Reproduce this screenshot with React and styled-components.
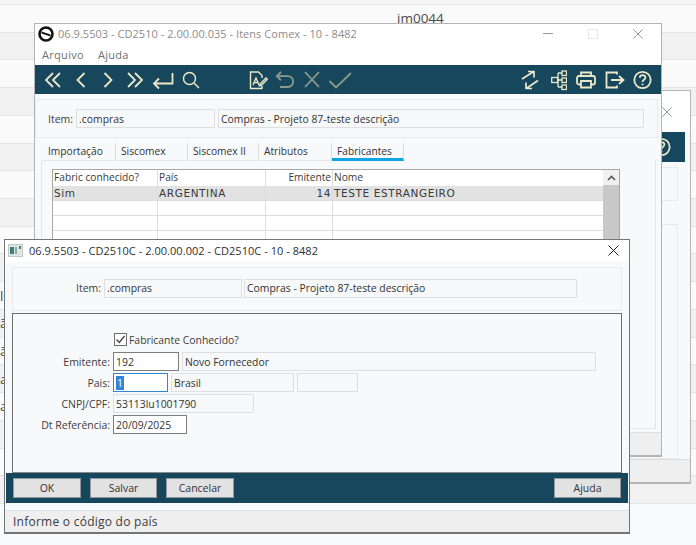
import React from 'react';
import styled, { createGlobalStyle } from 'styled-components';

const Global = createGlobalStyle`
  html, body { margin: 0; padding: 0; background: #f9fafc; }
  body { font-family: 'Open Sans', 'Noto Sans', sans-serif; font-size: 11px; color: #333; }
`;

const Page = styled.div`
  position: relative;
  width: 696px;
  height: 545px;
  overflow: hidden;
  background: #f9fafc;
`;

const Backdrop = styled.div`
  display: flex;
  flex-direction: column;
`;

const TopStrip = styled.div`
  height: 4px;
  background: #f5f5f5;
  border-bottom: 1px solid #e6e6e6;
`;

const BackRow = styled.div`
  height: 27.72px;
  box-sizing: border-box;
  display: flex;
  align-items: center;
  background: ${(p) => (p.$odd ? '#f1f1f1' : '#fafafa')};
  border-bottom: 1px solid #e4e4e4;
  font-size: 13.5px;
  color: #4a4a4a;
  padding-left: ${(p) => p.$indent || 0}px;
`;

const Window = styled.div`
  position: absolute;
  left: ${(p) => p.$left}px;
  top: ${(p) => p.$top}px;
  width: ${(p) => p.$width}px;
  height: ${(p) => p.$height}px;
  box-sizing: border-box;
  border: ${(p) => (p.$active ? '1px solid #747474' : '1px solid #b4b4b4')};
  border-bottom-width: 2px;
  background: #f8f9fb;
  display: flex;
  flex-direction: column;
  overflow: hidden;
`;

const TitleBar = styled.div`
  height: ${(p) => p.$height || 21}px;
  box-sizing: border-box;
  flex: none;
  background: #fff;
  display: flex;
  align-items: center;
  padding: 0 ${(p) => p.$right || 14}px ${(p) => p.$lift || 0}px 3px;
  font-size: 11px;
  color: ${(p) => (p.$active ? '#2f2f2f' : '#8c8c8c')};
`;

const TitleText = styled.span`
  margin-left: ${(p) => p.$gap || 4}px;
  flex: 1;
  white-space: nowrap;
  letter-spacing: 0.04px;
`;

const Caption = styled.div`
  display: flex;
  align-items: center;
  gap: 35px;
`;

const MenuBar = styled.div`
  height: 19px;
  box-sizing: border-box;
  flex: none;
  background: #fff;
  display: flex;
  align-items: center;
  gap: 14px;
  padding: 0 0 3px 7px;
  font-size: 11px;
  color: #6f6f6f;
  letter-spacing: 0.3px;
`;

const Toolbar = styled.div`
  height: ${(p) => p.$height || 29}px;
  flex: none;
  margin: 0 ${(p) => p.$inset || 0}px 0 0;
  background: #17475c;
  display: flex;
  align-items: center;
  padding: 0 ${(p) => p.$end || 9}px 0 9px;
`;

const ToolIcon = styled.svg`
  flex: none;
  margin-left: ${(p) => p.$gap || 0}px;
  fill: none;
  stroke: ${(p) => (p.$off ? '#8d9b8f' : '#ebe8c9')};
  stroke-width: 1.8;
`;

const Spacer = styled.div`
  flex: 1;
`;

const HeaderPanel = styled.div`
  flex: none;
  box-sizing: border-box;
  height: ${(p) => p.$height}px;
  margin: ${(p) => p.$margin};
  border: 1px solid #e8eaec;
  display: flex;
  align-items: center;
  padding: 0 0 ${(p) => p.$lift || 0}px ${(p) => p.$pad}px;
`;

const FieldLabel = styled.span`
  color: #3c3c3c;
  font-size: 10.5px;
  margin-right: 3px;
  white-space: nowrap;
  ${(p) => p.$width && `width: ${p.$width}px; text-align: right;`}
`;

const Field = styled.div`
  box-sizing: border-box;
  flex: none;
  width: ${(p) => p.$width}px;
  height: ${(p) => p.$height || 19}px;
  margin-left: ${(p) => p.$gap || 0}px;
  padding-left: 2px;
  display: flex;
  align-items: center;
  font-size: 10.4px;
  color: #333;
  white-space: nowrap;
  border: ${(p) =>
    p.$focus ? '1px solid #2f86c8' : p.$edit ? '1px solid #7d7d7d' : '1px solid #dfdfdf'};
  background: ${(p) => (p.$edit || p.$focus ? '#fff' : '#f7f8f9')};
`;

const Tabs = styled.div`
  flex: none;
  height: 18px;
  margin: 5px 0 0 7px;
  display: flex;
  align-items: flex-end;
`;

const Tab = styled.div`
  box-sizing: border-box;
  width: ${(p) => p.$width}px;
  height: 18px;
  padding-left: ${(p) => p.$pad}px;
  font-size: 10.2px;
  line-height: 17px;
  color: #333;
  white-space: nowrap;
  border-right: 1px solid #dcdcdc;
  border-bottom: ${(p) => (p.$on ? '3px solid #0ea5e6' : '1px solid #e6e6e6')};
`;

const TabPane = styled.div`
  flex: none;
  height: 268px;
  margin: 0 5px 0 6px;
  box-sizing: border-box;
  border: 1px solid #e4e4e4;
  border-top: none;
  padding: 8px 0 0 10px;
`;

const Grid = styled.div`
  width: 568px;
  box-sizing: border-box;
  border: 1px solid #a8a8a8;
  background: #fff;
  display: flex;
`;

const GridBody = styled.div`
  flex: 1;
`;

const GridRow = styled.div`
  display: grid;
  grid-template-columns: 105px 108px 67px 1fr;
  height: ${(p) => (p.$head ? 16 : 15)}px;
  box-sizing: border-box;
  background: ${(p) => (p.$sel ? '#e2e2e2' : '#fff')};
  border-bottom: ${(p) => (p.$head ? 'none' : '1px solid #dcdcdc')};
`;

const GridCell = styled.div`
  padding: 0 1px;
  font-family: ${(p) => (p.$head ? "'Open Sans', sans-serif" : "'DejaVu Sans', sans-serif")};
  font-size: ${(p) => (p.$head ? 10.2 : 10.5)}px;
  letter-spacing: ${(p) => (p.$head ? 0 : 0.6)}px;
  line-height: ${(p) => (p.$head ? 15 : 15)}px;
  color: #3a3a3a;
  white-space: nowrap;
  text-align: ${(p) => (p.$num ? 'right' : 'left')};
  border-right: ${(p) => (p.$last ? 'none' : '1px solid #dcdcdc')};
`;

const ScrollBar = styled.div`
  width: 16px;
  flex: none;
  background: #c8c8c8;
  display: flex;
  flex-direction: column;
`;

const ScrollUp = styled.div`
  height: 15px;
  background: #f0f0f0;
  display: flex;
  align-items: center;
  justify-content: center;
`;

const StatusBar = styled.div`
  flex: none;
  height: ${(p) => p.$height || 23}px;
  box-sizing: border-box;
  background: #efefef;
  border-top: 1px solid #dedede;
  display: flex;
  align-items: center;
  padding-left: 8px;
  font-size: 12px;
  letter-spacing: 0.25px;
  color: #3c3c3c;
`;

const Form = styled.div`
  flex: none;
  box-sizing: border-box;
  height: 160px;
  margin: 2px 7px 0;
  border: 1px solid #6c6c6c;
  border-bottom-color: #8a8a8a;
  padding-top: 19px;
  display: flex;
  flex-direction: column;
  gap: 2px;
`;

const FormRow = styled.div`
  display: flex;
  align-items: center;
`;

const CheckRow = styled.div`
  display: flex;
  align-items: center;
  height: 13px;
  margin: 0 0 4px 101px;
  font-size: 10.4px;
  color: #3c3c3c;
`;

const CheckBox = styled.span`
  box-sizing: border-box;
  width: 13px;
  height: 13px;
  margin-right: 2px;
  border: 1px solid #6d6d6d;
  background: #fff;
  display: flex;
`;

const Selected = styled.span`
  background: #2f86d8;
  color: #fff;
  padding: 0 1px;
`;

const ButtonBar = styled.div`
  flex: none;
  height: 30px;
  margin: 0 1px;
  background: #17475c;
  display: flex;
  align-items: center;
  padding: 0 7px;
`;

const Button = styled.div`
  box-sizing: border-box;
  width: ${(p) => p.$width}px;
  height: 20px;
  margin-right: ${(p) => p.$gap || 0}px;
  background: #e2e2e2;
  border: 1px solid #8e9aa0;
  display: flex;
  align-items: center;
  justify-content: center;
  font-size: 10.5px;
  color: #333;
`;

const Logo = () => (
  <svg width="16" height="16" viewBox="0 0 16 16">
    <circle cx="8" cy="8" r="6.5" fill="none" stroke="#111" strokeWidth="2.6" />
    <path d="M3.5 5.6 L12.5 8.6 L12.5 10.6 L3.5 7.6 Z" fill="#111" />
  </svg>
);

const AppIcon = () => (
  <svg width="15" height="13" viewBox="0 0 15 13">
    <rect x="0.5" y="0.5" width="14" height="12" fill="#dfe4e4" stroke="#c4c8c8" />
    <rect x="2" y="3" width="4" height="7" fill="#3d7f78" />
    <rect x="7" y="3" width="2" height="7" fill="#8fa8a8" />
    <rect x="11" y="2" width="2" height="3" fill="#66757d" />
  </svg>
);

const CloseMark = ({ color = '#8a8a8a', size = 11 }) => (
  <svg width={size} height={size} viewBox="0 0 11 11" fill="none" stroke={color} strokeWidth="1">
    <path d="M0.5 0.5 L10.5 10.5 M10.5 0.5 L0.5 10.5" />
  </svg>
);

const Tool = ({ w = 20, gap, off, children }) => (
  <ToolIcon width={w} height="22" viewBox={`0 0 ${w} 22`} $gap={gap} $off={off}>
    {children}
  </ToolIcon>
);

const HelpIcon = ({ gap }) => (
  <Tool w={19} gap={gap}>
    <circle cx="9.5" cy="11" r="8.2" />
    <path d="M6.8 8.8 C6.8 5.4 12.4 5.4 12.4 8.6 C12.4 10.8 9.5 10.6 9.5 13" />
    <path d="M9.5 14.6 V16.2" />
  </Tool>
);

const LeftTools = () => (
  <>
    <Tool w={18}>
      <path d="M9 4 L2 11 L9 18 M16 4 L9 11 L16 18" />
    </Tool>
    <Tool w={11} gap={13}>
      <path d="M9.5 4 L2.5 11 L9.5 18" />
    </Tool>
    <Tool w={11} gap={17}>
      <path d="M1.5 4 L8.5 11 L1.5 18" />
    </Tool>
    <Tool w={18} gap={12}>
      <path d="M2 4 L9 11 L2 18 M9 4 L16 11 L9 18" />
    </Tool>
    <Tool w={22} gap={8}>
      <path d="M20.5 4 V14.5 H2 M7 9.5 L2 14.5 L7 19.5" />
    </Tool>
    <Tool w={18} gap={8}>
      <g strokeWidth="1.5">
        <circle cx="7.5" cy="9.5" r="6" />
        <path d="M12 14 L17 19" />
      </g>
    </Tool>
    <Tool w={19} gap={49}>
      <g strokeWidth="1.4">
        <path d="M13 17 V19.5 H1.5 V3 H9.5 L13 6.5 V9" />
        <path d="M4 16 L7 9 L10 16 M5 13.6 H9" />
        <path d="M11 15 L17 9 L18.3 10.3 L12.4 16.3 L10.5 16.8 Z" />
      </g>
    </Tool>
    <Tool w={19} gap={7} off>
      <path d="M6 3 L1.8 7.2 L6 11.4 M2 7.2 H12.5 C20 7.2 20 18 12.5 18 H5" />
    </Tool>
    <Tool w={18} gap={9} off>
      <path d="M2 3 L16 18 M16 3 L2 18" />
    </Tool>
    <Tool w={24} gap={7} off>
      <path d="M1.5 12 L8 18.5 L23 4" />
    </Tool>
  </>
);

const RightTools = () => (
  <>
    <Tool w={19}>
      <g strokeWidth="1.7">
        <path d="M2 10 L13 3 M8 2.5 H14 V8.5" />
        <path d="M18 11.5 L7 19 M12 19.5 H6 V13.5" />
      </g>
    </Tool>
    <Tool w={16} gap={12}>
      <g strokeWidth="1.3">
        <rect x="0.7" y="8.5" width="6" height="5" />
        <rect x="11" y="2" width="4.5" height="4.5" />
        <rect x="11" y="9" width="4.5" height="4.5" />
        <rect x="11" y="16" width="4.5" height="4.5" />
        <path d="M7 11 H11 M7 4 H11 M7 18 H11 M7 4 V18" />
      </g>
    </Tool>
    <Tool w={20} gap={9}>
      <path d="M5 7 V3.5 H15 V7" />
      <path d="M5 15.5 H3 C1.8 15.5 1 14.7 1 13.5 V9 C1 7.8 1.8 7 3 7 H17 C18.2 7 19 7.8 19 9 V13.5 C19 14.7 18.2 15.5 17 15.5 H15" />
      <path d="M5 12 H15 V18.5 H5 Z" />
    </Tool>
    <Tool w={20} gap={9}>
      <path d="M12 5.5 V3.5 H1.5 V18.5 H12 V16.5" />
      <path d="M6 11 H18 M14 7 L18.5 11 L14 15" />
    </Tool>
    <HelpIcon gap={8} />
  </>
);

const backRows = [
  { text: 'im0044', indent: 397 }, {}, {}, {}, {}, {}, {}, {}, {}, {},
  { text: 'li' }, { text: 'ã' }, { text: 'ã' }, { text: 'a' }, { text: 'a' }, {}, {}, {},
];

const emptyRows = [0, 1, 2, 3, 4, 5, 6, 7, 8, 9, 10, 11, 12, 13];

function MainWindow() {
  return (
    <Window $left={34} $top={23} $width={628} $height={434}>
      <TitleBar $height={22} $right={18} $lift={3}>
        <Logo />
        <TitleText>06.9.5503 - CD2510 - 2.00.00.035 - Itens Comex - 10 - 8482</TitleText>
        <Caption>
          <svg width="10" height="11" viewBox="0 0 10 11" stroke="#9a9a9a"><path d="M0 5.5 H10" /></svg>
          <svg width="10" height="10" viewBox="0 0 10 10" fill="none" stroke="#e8e8e8"><rect x="0.5" y="0.5" width="9" height="9" /></svg>
          <CloseMark size={10} />
        </Caption>
      </TitleBar>
      <MenuBar>
        <span>Arquivo</span>
        <span>Ajuda</span>
      </MenuBar>
      <Toolbar>
        <LeftTools />
        <Spacer />
        <RightTools />
      </Toolbar>
      <HeaderPanel $height={39} $margin="5px 3px 0 0" $pad={12}>
        <FieldLabel>Item:</FieldLabel>
        <Field $width={139}>.compras</Field>
        <Field $width={426} $gap={3}>Compras - Projeto 87-teste descrição</Field>
      </HeaderPanel>
      <Tabs>
        <Tab $width={74} $pad={6}>Importação</Tab>
        <Tab $width={72} $pad={5}>Siscomex</Tab>
        <Tab $width={71} $pad={5}>Siscomex II</Tab>
        <Tab $width={73} $pad={5}>Atributos</Tab>
        <Tab $width={72} $pad={5} $on>Fabricantes</Tab>
      </Tabs>
      <TabPane>
        <Grid>
          <GridBody>
            <GridRow $head>
              <GridCell $head>Fabric conhecido?</GridCell>
              <GridCell $head>País</GridCell>
              <GridCell $head $num>Emitente</GridCell>
              <GridCell $head $last>Nome</GridCell>
            </GridRow>
            <GridRow $sel>
              <GridCell>Sim</GridCell>
              <GridCell>ARGENTINA</GridCell>
              <GridCell $num>14</GridCell>
              <GridCell $last>TESTE ESTRANGEIRO</GridCell>
            </GridRow>
            {emptyRows.map((n) => (
              <GridRow key={n}>
                <GridCell />
                <GridCell />
                <GridCell />
                <GridCell $last />
              </GridRow>
            ))}
          </GridBody>
          <ScrollBar>
            <ScrollUp>
              <svg width="9" height="6" viewBox="0 0 9 6" fill="none" stroke="#555" strokeWidth="1.6">
                <path d="M1 5 L4.5 1.5 L8 5" />
              </svg>
            </ScrollUp>
          </ScrollBar>
        </Grid>
      </TabPane>
      <Spacer />
      <StatusBar />
    </Window>
  );
}

function BackWindow() {
  return (
    <Window $left={340} $top={90} $width={351} $height={394}>
      <TitleBar $height={41} $right={18}>
        <Spacer />
        <CloseMark size={10} />
      </TitleBar>
      <Toolbar $height={30} $inset={5} $end={14}>
        <Spacer />
        <HelpIcon />
      </Toolbar>
      <HeaderPanel $height={34} $margin="5px 12px 0 0" $pad={0} />
      <HeaderPanel $height={235} $margin="23px 12px 0 0" $pad={0} />
      <Spacer />
      <StatusBar />
    </Window>
  );
}

function Dialog() {
  return (
    <Window $left={4} $top={239} $width={626} $height={295} $active>
      <TitleBar $height={22} $right={10} $lift={2} $active>
        <AppIcon />
        <TitleText $gap={6}>06.9.5503 - CD2510C - 2.00.00.002 - CD2510C - 10 - 8482</TitleText>
        <CloseMark color="#222" />
      </TitleBar>
      <HeaderPanel $height={44} $margin="5px 7px 0" $pad={63} $lift={2}>
        <FieldLabel>Item:</FieldLabel>
        <Field $width={138}>.compras</Field>
        <Field $width={333} $gap={2}>Compras - Projeto 87-teste descrição</Field>
      </HeaderPanel>
      <Form>
        <CheckRow>
          <CheckBox>
            <svg width="11" height="11" viewBox="0 0 11 11" fill="none" stroke="#444" strokeWidth="1.3">
              <path d="M1.5 5.5 L4.3 8.5 L9.5 2" />
            </svg>
          </CheckBox>
          Fabricante Conhecido?
        </CheckRow>
        <FormRow>
          <FieldLabel $width={97}>Emitente:</FieldLabel>
          <Field $width={66} $edit>192</Field>
          <Field $width={414} $gap={3}>Novo Fornecedor</Field>
        </FormRow>
        <FormRow>
          <FieldLabel $width={97}>Pais:</FieldLabel>
          <Field $width={55} $focus><Selected>1</Selected></Field>
          <Field $width={123} $gap={3}>Brasil</Field>
          <Field $width={61} $gap={3} />
        </FormRow>
        <FormRow>
          <FieldLabel $width={97}>CNPJ/CPF:</FieldLabel>
          <Field $width={141}>53113lu1001790</Field>
        </FormRow>
        <FormRow>
          <FieldLabel $width={97}>Dt Referência:</FieldLabel>
          <Field $width={74} $edit>20/09/2025</Field>
        </FormRow>
      </Form>
      <ButtonBar>
        <Button $width={68} $gap={9}>OK</Button>
        <Button $width={67} $gap={9}>Salvar</Button>
        <Button $width={68}>Cancelar</Button>
        <Spacer />
        <Button $width={67}>Ajuda</Button>
      </ButtonBar>
      <Spacer />
      <StatusBar $height={22}>Informe o código do país</StatusBar>
    </Window>
  );
}

export default function App() {
  return (
    <Page>
      <Global />
      <Backdrop>
        <TopStrip />
        {backRows.map((r, i) => (
          <BackRow key={i} $odd={i % 2 === 1} $indent={r.indent}>{r.text}</BackRow>
        ))}
      </Backdrop>
      <BackWindow />
      <MainWindow />
      <Dialog />
    </Page>
  );
}
